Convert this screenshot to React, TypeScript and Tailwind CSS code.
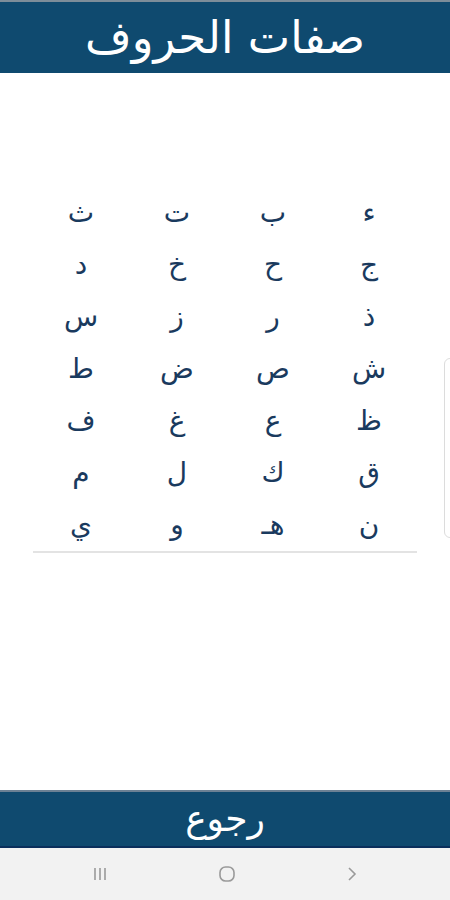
const letters = [
  "ء", "ب", "ت", "ث",
  "ج", "ح", "خ", "د",
  "ذ", "ر", "ز", "س",
  "ش", "ص", "ض", "ط",
  "ظ", "ع", "غ", "ف",
  "ق", "ك", "ل", "م",
  "ن", "هـ", "و", "ي",
];

export default function App() {
  return (
    <div
      dir="rtl"
      className="relative flex h-[900px] w-[450px] flex-col bg-white"
      style={{ fontFamily: '"DejaVu Sans", sans-serif' }}
    >
      {/* Header */}
      <div className="border-t-2 border-[#7d8d99] bg-[#0f4a6f]">
        <h1 className="flex h-[71px] items-center justify-center text-[45px] text-white">
          صفات الحروف
        </h1>
      </div>

      {/* Letters */}
      <div className="flex-1 px-[33px] pt-[114px]">
        <div className="grid grid-cols-4 border-b-2 border-[#e3e3e3]">
          {letters.map((l) => (
            <div
              key={l}
              className="flex h-[52px] items-center justify-center text-[28px] text-[#1a3a5e]"
            >
              {l}
            </div>
          ))}
        </div>
      </div>

      {/* side handle */}
      <div className="absolute right-[-6px] top-[358px] h-[180px] w-[12px] rounded-md border border-[#dcdcdc] bg-white" />

      {/* Back */}
      <div className="flex h-[58px] items-center justify-center border-t-2 border-b-2 border-t-[#6c8194] border-b-[#0a2f5c] bg-[#0f4a6f] text-[36px] text-white">
        رجوع
      </div>

      {/* Android nav */}
      <div dir="ltr" className="flex h-[52px] items-center justify-between bg-[#f2f2f2] px-[92px]">
        <svg width="16" height="16" viewBox="0 0 16 16">
          <path d="M3 2v12M8 2v12M13 2v12" stroke="#9a9a9a" strokeWidth="1.6" />
        </svg>
        <svg width="18" height="18" viewBox="0 0 18 18">
          <rect x="2" y="2" width="14" height="14" rx="5.5" fill="none" stroke="#9a9a9a" strokeWidth="1.6" />
        </svg>
        <svg width="12" height="16" viewBox="0 0 12 16">
          <path d="M3 2l6 6-6 6" fill="none" stroke="#9a9a9a" strokeWidth="1.6" />
        </svg>
      </div>
    </div>
  );
}
